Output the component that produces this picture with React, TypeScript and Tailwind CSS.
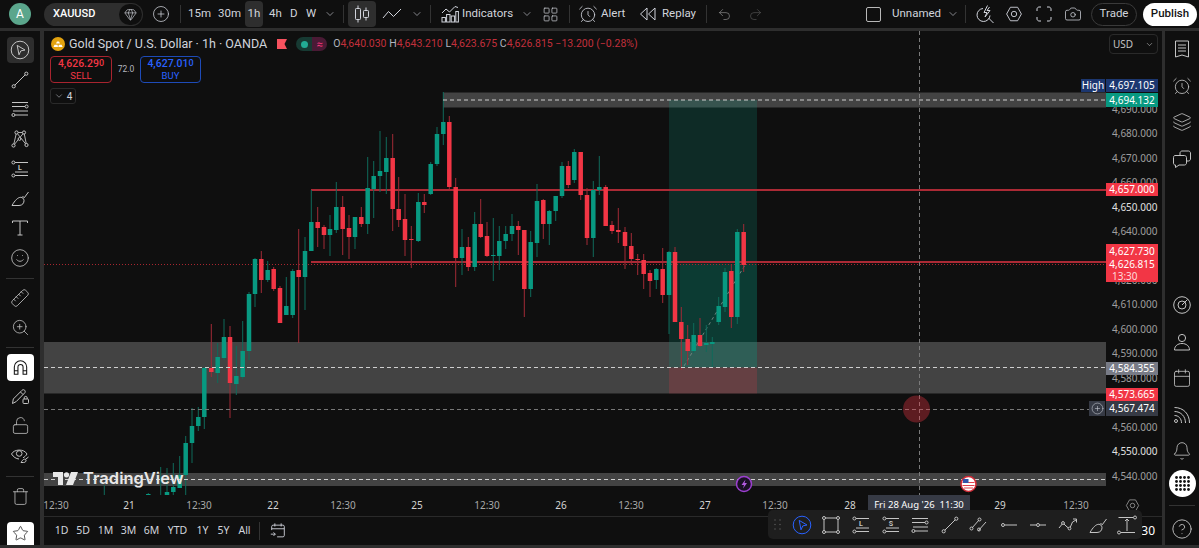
import React from "react";
import {
  AlarmClock,
  Bell,
  Calendar,
  Camera,
  ChevronDown,
  CircleHelp,
  CirclePlus,
  Gem,
  Layers,
  LayoutGrid,
  LockOpen,
  Redo2,
  Ruler,
  Smile,
  Star,
  Trash,
  Undo2,
  ZoomIn,
} from "lucide-react";

type Candle = [number, number, number, number, number, "g" | "r"];

// x, wick top, wick bottom, body top, body bottom, colour (page pixels)
const candles: Candle[] = [
  [104.3, 485, 495, 495, 495, "g"], [148.3, 493, 495, 494, 495, "g"], [160.7, 467, 495, 495, 495, "g"],
  [167, 468, 495, 492, 495, "g"], [173.3, 463, 495, 487, 492, "g"], [179.7, 456, 488, 475, 488, "g"],
  [185.7, 436, 495, 443, 475, "g"], [192, 408, 463, 426, 443, "g"], [198.3, 407, 431, 417, 426, "g"],
  [204.3, 367, 429, 368, 417, "g"], [211.3, 324, 377, 368, 372, "r"], [217.7, 343, 383, 357, 373, "g"],
  [224, 319, 360, 337, 358, "g"], [230, 326, 418, 337, 383, "r"], [236.3, 346, 395, 376, 384, "g"],
  [242.7, 321, 379, 351, 377, "g"], [249, 292, 360, 294, 351, "g"], [255, 258, 307, 259, 294, "g"],
  [261.3, 251, 293, 259, 280, "r"], [267.7, 261, 282, 270, 280, "g"], [273.7, 267, 291, 269, 289, "r"],
  [280, 286, 323, 288, 323, "r"], [286.3, 277, 315, 306, 315, "g"], [292.7, 269, 318, 271, 315, "g"],
  [298.7, 229, 343, 270, 277, "r"], [305, 237, 310, 251, 277, "g"], [311.3, 190, 251, 222, 251, "g"],
  [317.7, 207, 247, 222, 228, "r"], [324, 225, 249, 227, 235, "r"], [330, 215, 256, 229, 235, "g"],
  [336.3, 182, 233, 207, 230, "g"], [342.7, 196, 255, 207, 229, "r"], [349, 215, 259, 228, 237, "r"],
  [355, 217, 249, 217, 237, "g"], [361.3, 207, 227, 217, 224, "r"], [367.7, 157, 234, 188, 224, "g"],
  [373.7, 161, 218, 176, 189, "g"], [380, 131, 192, 171, 176, "g"], [386.3, 137, 194, 158, 172, "g"],
  [392.7, 134, 231, 158, 209, "r"], [398.7, 177, 227, 209, 220, "r"], [405, 194, 256, 219, 240, "r"],
  [411.3, 226, 268, 239, 240, "r"], [418.3, 193, 242, 202, 241, "g"], [424.3, 194, 213, 202, 205, "r"],
  [430.7, 162, 195, 164, 194, "g"], [437, 127, 166, 134, 164, "g"], [443.3, 92, 145, 122, 134, "g"],
  [449.3, 116, 189, 122, 187, "r"], [455.7, 178, 287, 187, 258, "r"], [462, 229, 275, 247, 258, "g"],
  [468.3, 237, 271, 247, 267, "r"], [474.7, 212, 271, 224, 267, "g"], [480.7, 199, 238, 224, 237, "r"],
  [487, 222, 257, 236, 256, "r"], [493.3, 218, 281, 255, 256, "g"], [499.3, 226, 270, 241, 256, "g"],
  [505.7, 226, 249, 234, 241, "g"], [512, 214, 241, 226, 234, "g"], [518.3, 221, 255, 226, 230, "r"],
  [524.3, 230, 317, 230, 289, "r"], [530.7, 231, 297, 242, 289, "g"], [537, 184, 257, 201, 243, "g"],
  [543.3, 199, 239, 200, 224, "r"], [549.3, 210, 245, 211, 224, "g"], [555.7, 196, 221, 196, 211, "g"],
  [562, 162, 198, 166, 196, "g"], [568.3, 161, 188, 166, 185, "r"], [574.3, 149, 183, 152, 180, "g"],
  [580.7, 152, 200, 152, 195, "r"], [587, 188, 245, 195, 238, "r"], [593.3, 181, 257, 190, 238, "g"],
  [599.3, 156, 195, 187, 190, "g"], [605.7, 185, 226, 187, 226, "r"], [612, 221, 234, 225, 231, "r"],
  [618.3, 208, 243, 230, 232, "r"], [625, 227, 269, 232, 246, "r"], [631.3, 233, 265, 246, 259, "r"],
  [637.7, 254, 275, 259, 260, "r"], [643.7, 254, 289, 260, 274, "r"], [650, 270, 297, 273, 281, "r"],
  [656.3, 268, 289, 269, 280, "g"], [662.7, 248, 303, 269, 295, "r"], [669, 251, 334, 252, 295, "g"],
  [675, 247, 322, 252, 322, "r"], [681.3, 307, 370, 322, 339, "r"], [687.7, 325, 365, 339, 351, "r"],
  [693.7, 323, 353, 335, 351, "g"], [700, 318, 347, 335, 346, "r"], [706.3, 325, 352, 343, 345, "g"],
  [712.3, 337, 368, 342, 344, "g"], [718.7, 297, 325, 306, 322, "g"], [725, 268, 312, 272, 307, "g"],
  [731.3, 264, 328, 271, 317, "r"], [737.3, 229, 324, 232, 317, "g"], [743.7, 224, 272, 232, 265, "r"],
];

// rows for 4,630 and 4,570 stay empty: the order labels sit right on them
const ticks = [
  "4,690.000", "4,680.000", "4,670.000", "4,660.000", "4,650.000", "4,640.000", "", "4,620.000",
  "4,610.000", "4,600.000", "4,590.000", "4,580.000", "", "4,560.000", "4,550.000", "4,540.000",
];

const Hex = ({ size = 18 }: { size?: number }) => (
  <svg width={size} height={size} viewBox="0 0 20 20" fill="none" stroke="currentColor">
    <path d="M6 2.5h8l4.2 7.5-4.2 7.5H6L1.8 10z" />
    <circle cx="10" cy="10" r="3" />
  </svg>
);

const Ico = ({ children, size = 20 }: { children: React.ReactNode; size?: number }) => (
  <svg width={size} height={size} viewBox="0 0 20 20" fill="none" stroke="currentColor" strokeWidth="1">
    {children}
  </svg>
);

const CursorIco = ({ size = 20 }: { size?: number }) => (
  <Ico size={size}>
    <circle cx="10" cy="10" r="8.8" />
    <path d="M7.2 5.4 15 10l-4.2.9-1.8 3.9z" />
  </Ico>
);
const LineIco = () => (
  <Ico>
    <path d="M4.8 15.2 15.2 4.8" />
    <circle cx="3.7" cy="16.3" r="1.6" />
    <circle cx="16.3" cy="3.7" r="1.6" />
  </Ico>
);
const FibIco = () => (
  <Ico>
    <path d="M2 3.5h16M2 7.5h13M3 12h15M5 16h13" />
    <circle cx="16.6" cy="7.5" r="1.5" />
    <circle cx="3.4" cy="16" r="1.5" />
  </Ico>
);
const XabcdIco = () => (
  <Ico>
    <path d="M3.5 16.5 6.5 3.5 16.5 16 14 3.5 3.5 16.5M6.5 3.5 14 3.5" strokeWidth="0.9" />
    <circle cx="3.5" cy="16.5" r="1.6" fill="#0f0f0f" />
    <circle cx="6.5" cy="3.5" r="1.6" fill="#0f0f0f" />
    <circle cx="16.5" cy="16" r="1.6" fill="#0f0f0f" />
    <circle cx="14" cy="3.5" r="1.6" fill="#0f0f0f" />
    <circle cx="9.5" cy="10" r="1.4" fill="#0f0f0f" />
  </Ico>
);
const PositionIco = ({ letter }: { letter: string }) => (
  <Ico>
    <path d="M5 3.5h13M5 13h13M5 16.5h13" />
    <circle cx="3.4" cy="3.5" r="1.5" />
    <circle cx="3.4" cy="16.5" r="1.5" />
    <text x="10" y="11" fontSize="7" fontWeight="700" fill="currentColor" stroke="none" textAnchor="middle" fontFamily="Roboto, sans-serif">
      {letter}
    </text>
  </Ico>
);
const BrushIco = () => (
  <Ico>
    <path d="M2 17.5h7c3.5 0 5.2-2.6 5-5.2-.2-1.8-1.6-3-3.2-3-2.9 0-5.8 3-8.8 8.2z" />
    <path d="m12.5 8 1.7 1.8L18.5 4" />
  </Ico>
);
const TextIco = () => (
  <Ico>
    <path d="M2.5 5V3h15v2M10 3v14M7.5 17h5" />
  </Ico>
);
const MagnetIco = () => (
  <Ico size={19}>
    <path d="M3.5 17V9.500a6.500 6.500 0 0 1 13 0V17h-3.800V9.500a2.700 2.700 0 0 0-5.400 0V17zM3.500 13.500h3.800M12.700 13.500h3.800" strokeWidth="1.100" />
  </Ico>
);
const PencilLockIco = () => (
  <Ico>
    <path d="M2.5 17.5 3.3 13 12 4.3c.8-.8 2-.8 2.7 0 .7.7.7 1.9 0 2.6L6.2 15.6z" />
    <path d="M10.5 6 13 8.5" />
    <rect x="13" y="13" width="5.5" height="4.5" rx="0.8" />
    <path d="M14.2 13v-1.2c0-1.9 3-1.9 3 0V13" />
  </Ico>
);
const EyeBrushIco = () => (
  <Ico>
    <path d="M1.5 9C4 4 14 3.500 17 9c-1 1.800-2.500 3-4 3.800M9 14C6 13.800 3.500 12 1.500 9" />
    <circle cx="9.200" cy="8.500" r="2.800" />
    <path d="M11 17.500h2.500c2 0 2.800-1.300 2.500-2.500-.5-1.400-3-1.400-5 2.500zM15.500 14.300l3-2.300" />
  </Ico>
);
const CandleIco = () => (
  <Ico>
    <path d="M6 1.500v3M6 15.500v3M14 3.500v3M14 13.500v3" />
    <rect x="3.500" y="4.500" width="5" height="11" rx="0.8" />
    <rect x="11.500" y="6.500" width="5" height="7" rx="0.8" />
  </Ico>
);
const IndicatorIco = () => (
  <Ico>
    <path d="M2 9l4-4 3.500 3L15 2.500l3 1" />
    <rect x="2" y="13.500" width="3.400" height="4.500" />
    <rect x="6.600" y="10.500" width="3.400" height="7.500" />
    <rect x="11.200" y="12" width="3.400" height="6" />
    <rect x="15.800" y="7.500" width="2.600" height="10.500" />
  </Ico>
);
const ReplayIco = () => (
  <Ico>
    <path d="M9 4v12L2.500 10zM17 4v12l-6.500-6z" />
  </Ico>
);
const FlashIco = () => (
  <Ico>
    <path d="M8 4.500a6.500 6.500 0 1 0 7 7" />
    <path d="M12.500 1.500 9 8.500h3L10 13l5-6.500h-3l2.500-3.500M13.500 14l5 5" />
  </Ico>
);
const CornersIco = () => (
  <Ico>
    <path d="M3 7V5c0-1 1-2 2-2h2M13 3h2c1 0 2 1 2 2v2M17 13v2c0 1-1 2-2 2h-2M7 17H5c-1 0-2-1-2-2v-2" />
  </Ico>
);
const WatchIco = () => (
  <Ico>
    <path d="M3.500 2h13v16l-6.500-2-6.500 2z" />
    <path d="M6 6h8M6 9h8M6 12h8" />
  </Ico>
);
const ChatIco = () => (
  <Ico>
    <path d="M8 6V4c0-1 1-2 2-2h6.500c1 0 2 1 2 2v6c0 1-1 2-2 2H15" />
    <path d="M3 6.500h9.500c1 0 2 1 2 2v5.500c0 1-1 2-2 2H7l-3.500 2.500V16H3c-1 0-1.500-1-1.500-2V8.500c0-1 .5-2 1.500-2z" />
  </Ico>
);
const GaugeIco = () => (
  <Ico>
    <circle cx="10" cy="10" r="8.300" />
    <circle cx="10" cy="10" r="4" />
    <path d="M10 10 15.500 4.500" />
  </Ico>
);
const PeopleIco = () => (
  <Ico>
    <circle cx="10" cy="6" r="3.600" />
    <path d="M2.500 18c0-4 3.200-6.500 7.500-6.500s7.500 2.500 7.500 6.500z" />
  </Ico>
);
const SignalIco = () => (
  <Ico>
    <circle cx="4" cy="16" r="1.500" />
    <path d="M2.500 10.500c4 0 7 3 7 7.500M2.500 6.500c6.500 0 11 5 11 11.500M2.500 2.500c9 0 15 6.500 15 15.500" />
  </Ico>
);

const railTop = [
  <CursorIco key="a" />, <LineIco key="b" />, <FibIco key="c" />, <XabcdIco key="d" />,
  <PositionIco key="e" letter="L" />, <BrushIco key="f" />, <TextIco key="g" />,
  <Smile key="h" size={20} strokeWidth={1} />,
];

const timeLabels = [
  { t: "12:30", c: "w-[70px] ml-[-23px] text-[#a8a8a8]" },
  { t: "21", c: "w-[72px] pl-[4px] text-[#d4d4d4]" },
  { t: "12:30", c: "w-[72px] text-[#a8a8a8]" },
  { t: "22", c: "w-[72px] pl-[4px] text-[#d4d4d4]" },
  { t: "12:30", c: "w-[72px] text-[#a8a8a8]" },
  { t: "25", c: "w-[72px] pl-[4px] text-[#d4d4d4]" },
  { t: "12:30", c: "w-[72px] text-[#a8a8a8]" },
  { t: "26", c: "w-[72px] pl-[4px] text-[#d4d4d4]" },
  { t: "12:30", c: "w-[72px] text-[#a8a8a8]" },
  { t: "27", c: "w-[72px] pl-[4px] text-[#d4d4d4]" },
  { t: "12:30", c: "w-[72px] text-[#a8a8a8]" },
  { t: "28", c: "w-[78px] text-[#d4d4d4]" },
  { t: "29", c: "w-[72px] ml-[75px] text-[#d4d4d4]" },
  { t: "12:30", c: "w-[72px] ml-[4px] text-[#a8a8a8]" },
];

const ranges = [
  { t: "1D", c: "w-[21px] ml-[7px]" },
  { t: "5D", c: "w-[22px]" },
  { t: "1M", c: "w-[23px]" },
  { t: "3M", c: "w-[23px]" },
  { t: "6M", c: "w-[23px]" },
  { t: "YTD", c: "w-[29px]" },
  { t: "1Y", c: "w-[21px]" },
  { t: "5Y", c: "w-[21px]" },
  { t: "All", c: "w-[21px]" },
];

const Sep = ({ c }: { c: string }) => <div className={`w-px h-[18px] bg-[#333333] shrink-0 ${c}`} />;

function Chart() {
  return (
    <svg className="absolute inset-0" width="1062" height="464" viewBox="44 31 1062 464">
      <rect x="443" y="92.500" width="663" height="15" fill="#434343" />
      <rect x="44" y="342" width="1062" height="51.500" fill="#434343" />
      <rect x="44" y="473" width="1062" height="13" fill="#434343" />

      <rect x="669" y="100" width="88" height="267.500" fill="#089981" fillOpacity="0.2" />
      <rect x="680" y="264" width="77" height="103.500" fill="#089981" fillOpacity="0.15" />
      <rect x="669" y="367.500" width="88" height="26" fill="#f23645" fillOpacity="0.2" />

      <path d="M311 190H1106M311 262H1106" stroke="#ab2a35" strokeWidth="2" />
      <path d="M44 264.500H1106" stroke="#a8262f" strokeDasharray="1 2" />
      <path d="M919.500 31V495" stroke="#7a7a7a" strokeDasharray="4 3" />
      <path d="M684 366 745 265" stroke="#6f8580" strokeDasharray="3 3" />

      {candles.map(([x, wt, wb, bt, bb, k]) => (
        <g key={x}>
          <path d={`M${x} ${wt}V${wb}`} stroke={k === "g" ? "#0f6a5a" : "#a12a36"} />
          <rect x={x - 2.25} y={bt} width="4.500" height={bb - bt} fill={k === "g" ? "#089981" : "#f23645"} />
        </g>
      ))}

      <path d="M443 100H1106M44 367.500H1106M44 479.500H1106" stroke="#cfcfcf" strokeDasharray="4 3" />
      <path d="M44 409.500H1090" stroke="#777777" strokeDasharray="4 3" />

      <circle cx="916.500" cy="409" r="13.500" fill="#f23645" fillOpacity="0.35" />

      <circle cx="744" cy="484" r="7.500" fill="#1a0f24" stroke="#9c3fd0" strokeWidth="1.500" />
      <path d="M745.500 479.500 741.500 485h2.500l-1 3.500 4-5.500h-2.500z" fill="#b35be0" />
      <circle cx="968.500" cy="484" r="7.500" fill="#ffffff" stroke="#d12a36" strokeWidth="1.500" />
      <path d="M962.500 482.500h12M962.500 485.500h12M964 488h9" stroke="#e0414d" />
      <rect x="963" y="479" width="5.500" height="4" fill="#2f53a8" />
    </svg>
  );
}

export default function App() {
  return (
    <div className="w-[1199px] h-[548px] overflow-hidden flex flex-col gap-[3px] pb-[3px] bg-[#2e2e2e] text-[#d1d4dc] [font-family:Roboto,sans-serif]">
      {/* top bar */}
      <header className="h-[28px] shrink-0 flex items-center bg-[#0f0f0f] text-[11.5px]">
        <div className="ml-[9px] w-[22px] h-[22px] rounded-full bg-[#5ba68c] text-white text-[12px] flex items-center justify-center">A</div>
        <div className="ml-[13px] w-[99px] h-[23px] rounded-full bg-[#2e2e2e] flex items-center justify-between">
          <span className="ml-[9px] text-[11px] font-medium text-white">XAUUSD</span>
          <span className="w-[23px] h-[21px] mr-px rounded-full bg-[#0f0f0f] flex items-center justify-center">
            <Gem size={13} strokeWidth={1.2} />
          </span>
        </div>
        <CirclePlus className="ml-[9px]" size={18} strokeWidth={1} />
        <Sep c="ml-[10px]" />
        <span className="ml-[7px] w-[21px]">15m</span>
        <span className="ml-[9px] w-[21px]">30m</span>
        <span className="ml-[6px] w-[18px] h-[26px] rounded-[4px] bg-[#2e2e2e] flex items-center justify-center">1h</span>
        <span className="ml-[6px] w-[12px]">4h</span>
        <span className="ml-[9px] w-[7px]">D</span>
        <span className="ml-[9px] w-[10px]">W</span>
        <ChevronDown className="ml-[8px]" size={12} strokeWidth={1.2} />
        <Sep c="ml-[7px]" />
        <span className="ml-[4px] w-[28px] h-[26px] rounded-[4px] bg-[#2e2e2e] flex items-center justify-center"><CandleIco /></span>
        <span className="ml-[6px]">
          <Ico><path d="M1 14 6.500 7.500l5 5L19 5" /></Ico>
        </span>
        <ChevronDown className="ml-[9px]" size={12} strokeWidth={1.2} />
        <Sep c="ml-[7px]" />
        <span className="ml-[9px]"><IndicatorIco /></span>
        <span className="ml-[2px] w-[48px]">Indicators</span>
        <ChevronDown className="ml-[11px]" size={12} strokeWidth={1.2} />
        <LayoutGrid className="ml-[9px]" size={17} strokeWidth={1} />
        <Sep c="ml-[10px]" />
        <AlarmClock className="ml-[8px]" size={20} strokeWidth={1} />
        <span className="ml-[3px] w-[24px]">Alert</span>
        <span className="ml-[13px]"><ReplayIco /></span>
        <span className="ml-[4px] w-[33px]">Replay</span>
        <Sep c="ml-[11px]" />
        <Undo2 className="ml-[10px] text-[#9a9a9a]" size={15} strokeWidth={1} />
        <Redo2 className="ml-[16px] text-[#5a5a5a]" size={15} strokeWidth={1} />
        <div className="ml-[103px] w-[15px] h-[15px] rounded-[2px] border border-[#b8b8b8]" />
        <span className="ml-[11px] w-[46px]">Unnamed</span>
        <ChevronDown className="ml-[9px]" size={12} strokeWidth={1.2} />
        <Sep c="ml-[6px]" />
        <span className="ml-[9px]"><FlashIco /></span>
        <span className="ml-[10px]"><Hex /></span>
        <span className="ml-[11px]"><CornersIco /></span>
        <Camera className="ml-[10px]" size={18} strokeWidth={1} />
        <span className="ml-[9px] w-[46px] h-[23px] rounded-full border border-[#3a3a3a] flex items-center justify-center">Trade</span>
        <span className="ml-[6px] w-[54px] h-[23px] rounded-full bg-white text-[#131313] font-medium flex items-center justify-center">Publish</span>
      </header>

      <div className="flex-1 min-h-0 flex">
        {/* left rail */}
        <aside className="w-[40px] shrink-0 mr-[4px] bg-[#0f0f0f] flex flex-col items-center pt-[4px] text-[#c4c4c4]">
          {railTop.map((icon, i) => (
            <div key={i} className="relative h-[29.7px] w-[27px] shrink-0 flex items-center justify-center">
              {i === 0 && <div className="absolute inset-x-0 top-[2px] bottom-[2px] rounded-[4px] bg-[#2e2e2e]" />}
              <span className="relative flex">{icon}</span>
            </div>
          ))}
          <div className="mt-[5px] w-[28px] h-px shrink-0 bg-[#333333]" />
          <div className="mt-[4.600px] h-[29.7px] shrink-0 flex items-center"><Ruler className="-scale-x-100" size={20} strokeWidth={1} /></div>
          <div className="h-[29.7px] shrink-0 flex items-center"><ZoomIn size={19} strokeWidth={1} /></div>
          <div className="mt-[4.500px] w-[28px] h-px shrink-0 bg-[#333333]" />
          <div className="mt-[6px] w-[27px] h-[27px] shrink-0 rounded-[4px] bg-white text-[#131313] flex items-center justify-center"><MagnetIco /></div>
          <div className="h-[29.7px] shrink-0 flex items-center"><PencilLockIco /></div>
          <div className="h-[29.7px] shrink-0 flex items-center"><LockOpen size={19} strokeWidth={1} /></div>
          <div className="h-[29.7px] shrink-0 flex items-center"><EyeBrushIco /></div>
          <div className="mt-[5.500px] w-[28px] h-px shrink-0 bg-[#333333]" />
          <div className="mt-[4.700px] h-[29.7px] shrink-0 flex items-center"><Trash size={19} strokeWidth={1} /></div>
          <div className="mt-auto w-[27px] h-[23px] shrink-0 rounded-t-[4px] bg-white text-[#131313] flex items-center justify-center"><Star size={17} strokeWidth={1} /></div>
        </aside>

        {/* chart column */}
        <main className="relative w-[1118px] shrink-0 mr-[3px] bg-[#0f0f0f] flex flex-col">
          <div className="h-[464px] shrink-0 flex">
            <div className="relative w-[1062px] shrink-0 overflow-hidden">
              <Chart />
              <div className="absolute left-[7px] top-[5px] flex items-center h-[16px] text-[12.500px] whitespace-nowrap">
                <svg className="mr-[4px]" width="14" height="14" viewBox="0 0 14 14">
                  <circle cx="7" cy="7" r="7" fill="#e2a20f" />
                  <path d="M5 6.500 6 4.500h2l1 2zM2.500 10l1-2.300h3l.5 2.300zM7.300 10l.5-2.300h2.800l1 2.300z" fill="#ffffff" />
                </svg>
                <span>Gold Spot / U.S. Dollar · 1h · OANDA</span>
                <svg className="ml-[10px]" width="10" height="10" viewBox="0 0 10 10">
                  <path d="M0 0h10L7.500 5 10 10H0z" fill="#f7525f" />
                </svg>
                <span className="ml-[9px] w-[31px] h-[14px] rounded-full overflow-hidden flex">
                  <span className="w-[16px] bg-[#173a33] flex items-center justify-center"><span className="w-[7px] h-[7px] rounded-full bg-[#22ab94]" /></span>
                  <span className="w-[15px] bg-[#4a1a35] text-[#f2367a] text-[11px] leading-none flex items-center justify-center">≈</span>
                </span>
                <span className="ml-[6px] text-[10.500px] text-[#b2b5be]">
                  O<span className="text-[#c2303c]">4,640.030 </span>
                  H<span className="text-[#c2303c]">4,643.210 </span>
                  L<span className="text-[#c2303c]">4,623.675 </span>
                  C<span className="text-[#c2303c]">4,626.815 −13.200 (−0.28%)</span>
                </span>
              </div>
              <div className="absolute left-[6px] top-[25px] flex items-center whitespace-nowrap">
                <div className="w-[62px] h-[27px] rounded-[4px] border border-[#a8242f] flex flex-col items-center justify-center leading-[12px] text-[#f23645]">
                  <span className="text-[10.500px] font-medium">4,626.29<span className="relative top-[-1px] text-[9px]">0</span></span>
                  <span className="text-[9.500px]">SELL</span>
                </div>
                <span className="w-[28px] text-center text-[8.500px] text-[#b2b5be]">72.0</span>
                <div className="w-[61px] h-[27px] rounded-[4px] border border-[#1e4bb8] flex flex-col items-center justify-center leading-[12px] text-[#2962ff]">
                  <span className="text-[10.500px] font-medium">4,627.01<span className="relative top-[-1px] text-[9px]">0</span></span>
                  <span className="text-[9.500px]">BUY</span>
                </div>
              </div>
              <div className="absolute left-[6px] top-[57px] w-[26px] h-[16px] rounded-[3px] border border-[#2a2a2a] flex items-center justify-center gap-[3px] text-[10px]">
                <ChevronDown size={10} strokeWidth={1.2} />4
              </div>
              {/* TradingView mark */}
              <div className="absolute left-[9px] top-[439px] flex items-center gap-[5px] text-[#e8e8e8]">
                <svg width="25" height="13" viewBox="0 0 25 13" fill="currentColor">
                  <path d="M0 0h10v13H5V5H0z" />
                  <circle cx="13.500" cy="2.800" r="2.600" />
                  <path d="M18 0h7l-5 13h-7z" />
                </svg>
                <span className="text-[16.500px] font-semibold leading-none [font-family:Inter,sans-serif]">TradingView</span>
              </div>
            </div>

            {/* price axis */}
            <div className="relative w-[56px] shrink-0 pt-[66px] text-[10px] [font-family:'Noto_Sans',sans-serif]">
              {ticks.map((t, i) => (
                <div
                  key={i}
                  className={`h-[24.470px] flex items-center pl-[6px] ${t === "4,650.000" || t === "4,550.000" ? "text-[#e0e0e0]" : "text-[#9f9f9f]"}`}
                >
                  {t}
                </div>
              ))}
              <button className="absolute left-[3px] top-[3px] w-[49px] h-[20px] rounded-[4px] border border-[#2a2a2a] flex items-center justify-between px-[3px] text-[#c4c4c4]">
                USD<ChevronDown size={9} strokeWidth={1.500} />
              </button>
              <div className="absolute left-[-25px] top-[48px] w-[24px] h-[13px] bg-[#1c3770] text-white flex items-center justify-center">High</div>
              <div className="absolute left-0 top-[48px] w-[52px] h-[13px] bg-[#1c3770] text-white flex items-center justify-center">4,697.105</div>
              <div className="absolute left-0 top-[62px] w-[52px] h-[14px] bg-[#089981] text-white flex items-center justify-center">4,694.132</div>
              <div className="absolute left-0 top-[152px] w-[52px] h-[13px] bg-[#f23645] text-white flex items-center justify-center">4,657.000</div>
              <div className="absolute left-0 top-[213px] w-[52px] h-[14px] bg-[#f23645] text-white flex items-center justify-center">4,627.730</div>
              <div className="absolute left-0 top-[227px] w-[52px] h-[24px] bg-[#f23645] text-white flex flex-col items-center justify-center leading-[12px]">
                4,626.815
                <span className="w-full pl-[6px] text-[#ffd9dc]">13:30</span>
              </div>
              <div className="absolute left-0 top-[331px] w-[52px] h-[13px] bg-[#787b86] text-white flex items-center justify-center">4,584.355</div>
              <div className="absolute left-0 top-[357px] w-[52px] h-[13px] bg-[#f23645] text-white flex items-center justify-center">4,573.665</div>
              <div className="absolute left-0 top-[370px] w-[52px] h-[15px] bg-[#363a45] text-white flex items-center justify-center">4,567.474</div>
              <div className="absolute left-[-17px] top-[370px] w-[16px] h-[15px] bg-[#363a45] flex items-center justify-center">
                <CirclePlus size={13} strokeWidth={1} />
              </div>
            </div>
          </div>

          {/* time axis */}
          <div className="relative h-[22px] shrink-0 border-b border-[#2a2a2a] overflow-hidden flex items-center text-[10px] [font-family:'Noto_Sans',sans-serif]">
            {timeLabels.map((l, i) => (
              <span key={i} className={`shrink-0 text-center ${l.c}`}>{l.t}</span>
            ))}
            <span className="absolute left-[1081px] top-[3px] text-[#a8a8a8]"><Hex size={15} /></span>
            <div className="absolute left-[824px] top-0 w-[102px] h-full bg-[#363a45] pt-[3px] text-center text-white text-[9.500px] whitespace-nowrap">Fri 28 Aug '26&nbsp;&nbsp;11:30</div>
          </div>

          {/* range bar */}
          <div className="flex-1 flex items-center text-[10.500px] text-[#d1d4dc] [font-family:'Noto_Sans',sans-serif]">
            {ranges.map((r) => (
              <span key={r.t} className={`text-center ${r.c}`}>{r.t}</span>
            ))}
            <Sep c="ml-[4px]" />
            <span className="ml-[9px]">
              <Ico size={18}>
                <path d="M3 9V5c0-1 .8-1.500 1.500-1.500h11c.8 0 1.500.5 1.500 1.500v10c0 1-.7 1.500-1.500 1.500H9M3 7.500h14M6.500 1.500v3.500M13.500 1.500v3.500M2 13.500h5M5 11.500l2 2-2 2" />
              </Ico>
            </span>
            <span className="ml-auto mr-[7px] text-[12px] text-white">30</span>
          </div>

          {/* floating drawing toolbar */}
          <div className="absolute left-[724px] top-[479px] w-[374px] h-[29px] rounded-[5px] bg-[#1e1e1e] flex items-center text-[#c4c4c4]">
            <div className="w-[19px] flex justify-center">
              <svg width="7" height="11" viewBox="0 0 7 11" fill="#555555">
                <circle cx="1" cy="1" r="0.8" /><circle cx="6" cy="1" r="0.8" />
                <circle cx="1" cy="5.500" r="0.8" /><circle cx="6" cy="5.500" r="0.8" />
                <circle cx="1" cy="10" r="0.8" /><circle cx="6" cy="10" r="0.8" />
              </svg>
            </div>
            <div className="w-[29.7px] flex justify-center text-[#2962ff]"><CursorIco /></div>
            <div className="w-[29.7px] flex justify-center">
              <Ico>
                <rect x="3" y="3" width="14" height="14" />
                <circle cx="3" cy="3" r="1.500" fill="#1e1e1e" /><circle cx="17" cy="3" r="1.500" fill="#1e1e1e" />
                <circle cx="3" cy="17" r="1.500" fill="#1e1e1e" /><circle cx="17" cy="17" r="1.500" fill="#1e1e1e" />
              </Ico>
            </div>
            <div className="w-[29.7px] flex justify-center"><PositionIco letter="L" /></div>
            <div className="w-[29.7px] flex justify-center"><PositionIco letter="S" /></div>
            <div className="w-[29.7px] flex justify-center"><FibIco /></div>
            <div className="w-[29.7px] flex justify-center"><LineIco /></div>
            <div className="w-[29.7px] flex justify-center">
              <Ico>
                <path d="M3 13 10 5M9 16l8-9" />
                <circle cx="2.500" cy="13.500" r="1.500" /><circle cx="10.500" cy="4.500" r="1.500" /><circle cx="10" cy="14.500" r="1.500" />
              </Ico>
            </div>
            <div className="w-[29.7px] flex justify-center">
              <Ico><path d="M6 10h12" /><circle cx="4" cy="10" r="1.500" /></Ico>
            </div>
            <div className="w-[29.7px] flex justify-center">
              <Ico><path d="M2 10h6M12 10h6" /><circle cx="10" cy="10" r="1.500" /></Ico>
            </div>
            <div className="w-[29.7px] flex justify-center">
              <Ico>
                <path d="M1 13l4-5 3 3 3.500 3 3-7 3.500-2M15 4h3.500v3.500" />
                <circle cx="5" cy="8" r="1.400" fill="#1e1e1e" /><circle cx="11.500" cy="13.500" r="1.400" fill="#1e1e1e" />
              </Ico>
            </div>
            <div className="w-[29.7px] flex justify-center"><BrushIco /></div>
            <div className="w-[29.7px] flex justify-center">
              <Ico>
                <path d="M1.500 2.500h15M3.500 17.500H18M10 4v12M8 6l2-2 2 2" />
                <circle cx="18" cy="2.500" r="1.500" fill="#1e1e1e" /><circle cx="2" cy="17.500" r="1.500" fill="#1e1e1e" />
              </Ico>
            </div>
          </div>
        </main>

        {/* right rail */}
        <aside className="flex-1 bg-[#0f0f0f] flex flex-col items-center text-[#c4c4c4]">
          <div className="h-[36.500px] shrink-0 flex items-center"><WatchIco /></div>
          <div className="h-[36.500px] shrink-0 flex items-center"><AlarmClock size={20} strokeWidth={1} /></div>
          <div className="h-[36.500px] shrink-0 flex items-center"><Layers size={20} strokeWidth={1} /></div>
          <div className="h-[36.500px] shrink-0 flex items-center"><ChatIco /></div>
          <div className="mt-[110px] h-[36.500px] shrink-0 flex items-center"><GaugeIco /></div>
          <div className="h-[36.500px] shrink-0 flex items-center"><PeopleIco /></div>
          <div className="h-[36.500px] shrink-0 flex items-center"><Calendar size={20} strokeWidth={1} /></div>
          <div className="h-[36.500px] shrink-0 flex items-center"><SignalIco /></div>
          <div className="h-[36.500px] shrink-0 flex items-center"><Bell size={20} strokeWidth={1} /></div>
          <div className="w-[27px] h-[27px] shrink-0 rounded-full bg-white flex items-center justify-center">
            <svg width="15" height="15" viewBox="0 0 15 15" fill="#131313">
              {[1.500, 5.500, 9.500, 13.500].map((y) =>
                [1.500, 5.500, 9.500, 13.500].map((x) => <circle key={`${x}-${y}`} cx={x} cy={y} r="1.400" />)
              )}
            </svg>
          </div>
          <div className="mt-[8px] w-[26px] h-px shrink-0 bg-[#333333]" />
          <CircleHelp className="mt-[12px] shrink-0" size={22} strokeWidth={1} />
        </aside>
      </div>
    </div>
  );
}
